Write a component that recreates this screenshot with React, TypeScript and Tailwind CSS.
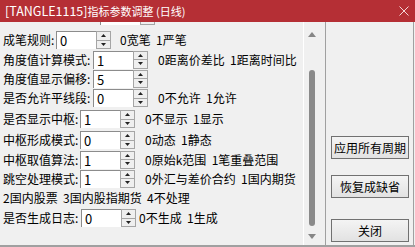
import React from "react";

const font = { fontFamily: '"Noto Sans CJK SC", "Noto Sans", sans-serif' };

type Row = {
  label: string;
  labelW: string;
  value: string;
  desc?: string;
  descGap: string;
  h: string;
};

const rows: Row[] = [
  { label: "成笔规则:", labelW: "w-[56px]", value: "0", desc: "0宽笔  1严笔", descGap: "ml-[9px]", h: "h-[20px]" },
  { label: "角度值计算模式:", labelW: "w-[93px]", value: "1", desc: "0距离价差比  1距离时间比", descGap: "ml-[10px]", h: "h-[19px]" },
  { label: "角度值显示偏移:", labelW: "w-[93px]", value: "5", descGap: "ml-[10px]", h: "h-[19px]" },
  { label: "是否允许平线段:", labelW: "w-[93px]", value: "0", desc: "0不允许  1允许", descGap: "ml-[10px]", h: "h-[20px]" },
  { label: "是否显示中枢:", labelW: "w-[80px]", value: "1", desc: "0不显示  1显示", descGap: "ml-[10px]", h: "h-[22px]" },
  { label: "中枢形成模式:", labelW: "w-[80px]", value: "0", desc: "0动态  1静态", descGap: "ml-[10px]", h: "h-[20px]" },
  { label: "中枢取值算法:", labelW: "w-[80px]", value: "1", desc: "0原始k范围  1笔重叠范围", descGap: "ml-[10px]", h: "h-[19px]" },
  { label: "跳空处理模式:", labelW: "w-[80px]", value: "1", desc: "0外汇与差价合约  1国内期货", descGap: "ml-[10px]", h: "h-[19px]" },
];

function Arrow({ up }: { up?: boolean }) {
  return (
    <svg width="5" height="3" viewBox="0 0 5 3" className="block">
      {up ? <path d="M2.5 0L5 3H0z" fill="#222" /> : <path d="M0 0h5L2.5 3z" fill="#222" />}
    </svg>
  );
}

function Spinner({ value }: { value: string }) {
  return (
    <div className="flex h-[18px] shrink-0">
      <div className="flex w-[40px] items-center border-l border-t border-[#8c8c8c] bg-white pl-[3px] text-[13px] leading-none text-black">
        {value}
      </div>
      <div className="flex w-[15px] flex-col">
        <div className="flex flex-1 items-center justify-center border border-[#a5a5a5] bg-[#efefef]">
          <Arrow up />
        </div>
        <div className="flex flex-1 items-center justify-center border border-t-0 border-[#a5a5a5] bg-[#efefef]">
          <Arrow />
        </div>
      </div>
    </div>
  );
}

function Button({ children, className }: { children: React.ReactNode; className?: string }) {
  return (
    <div
      className={`flex h-[23px] w-[78px] items-center justify-center border border-[#717171] bg-gradient-to-b from-[#f4f4f4] to-[#e2e2e2] text-[12px] text-black ${className ?? ""}`}
    >
      {children}
    </div>
  );
}

export default function App() {
  return (
    <div className="flex h-[247px] w-[415px] flex-col overflow-hidden bg-[#f0f0f0]" style={font}>
      <div className="flex h-[22px] shrink-0 items-center justify-between bg-[#b52f35] pl-[5px] pr-[6px] text-white">
        <span className="text-[12.5px] leading-none">
          [TANGLE1115]<span className="text-[11px]">指标参数调整 (日线)</span>
        </span>
        <svg width="10" height="10" viewBox="0 0 10 10">
          <path d="M0.5 0.5L9.5 9.5M9.5 0.5L0.5 9.5" stroke="#f3d6d7" strokeWidth="1" />
        </svg>
      </div>

      <div className="flex flex-1">
        <div className="w-[303px] overflow-hidden text-[12px] text-black">
          <div className="mt-[-16px] flex h-[20px] items-center">
            <div className="w-[100px]" />
            <Spinner value="" />
          </div>
          <div className="mt-[4px]">
            {rows.map((r) => (
              <div key={r.label} className={`flex items-center ${r.h}`}>
                <span className={`${r.labelW} shrink-0 whitespace-nowrap pl-[3px]`}>{r.label}</span>
                <Spinner value={r.value} />
                {r.desc && <span className={`${r.descGap} whitespace-pre`}>{r.desc}</span>}
              </div>
            ))}
            <div className="flex h-[20px] items-center whitespace-pre pl-[3px]">2国内股票  3国内股指期货  4不处理</div>
            <div className="flex h-[20px] items-center">
              <span className="w-[81px] shrink-0 whitespace-nowrap pl-[3px]">是否生成日志:</span>
              <Spinner value="0" />
              <span className="ml-[3px] whitespace-pre">0不生成  1生成</span>
            </div>
          </div>
        </div>

        <div className="flex w-[22px] flex-col border-l border-white pl-[4px] pt-[10px]">
          <svg width="8" height="5" viewBox="0 0 8 5">
            <path d="M4 0L8 5H0z" fill="#868686" />
          </svg>
          <div className="ml-[1px] mt-[33px] h-[156px] w-[6px] rounded-full bg-[#8a8a8a]" />
          <svg width="8" height="5" viewBox="0 0 8 5" className="mt-[8px]">
            <path d="M0 0h8L4 5z" fill="#868686" />
          </svg>
        </div>

        <div className="w-[88px] border-l border-[#a0a0a0] pl-[5px] pt-[114px]">
          <Button>应用所有周期</Button>
          <Button className="mt-[16px]">恢复成缺省</Button>
          <Button className="mt-[21px]">关闭</Button>
        </div>

        <div className="w-[2px] border-l border-[#a0a0a0]" />
      </div>
      <div className="h-[2px] shrink-0 bg-[#a0a0a0]" />
    </div>
  );
}
